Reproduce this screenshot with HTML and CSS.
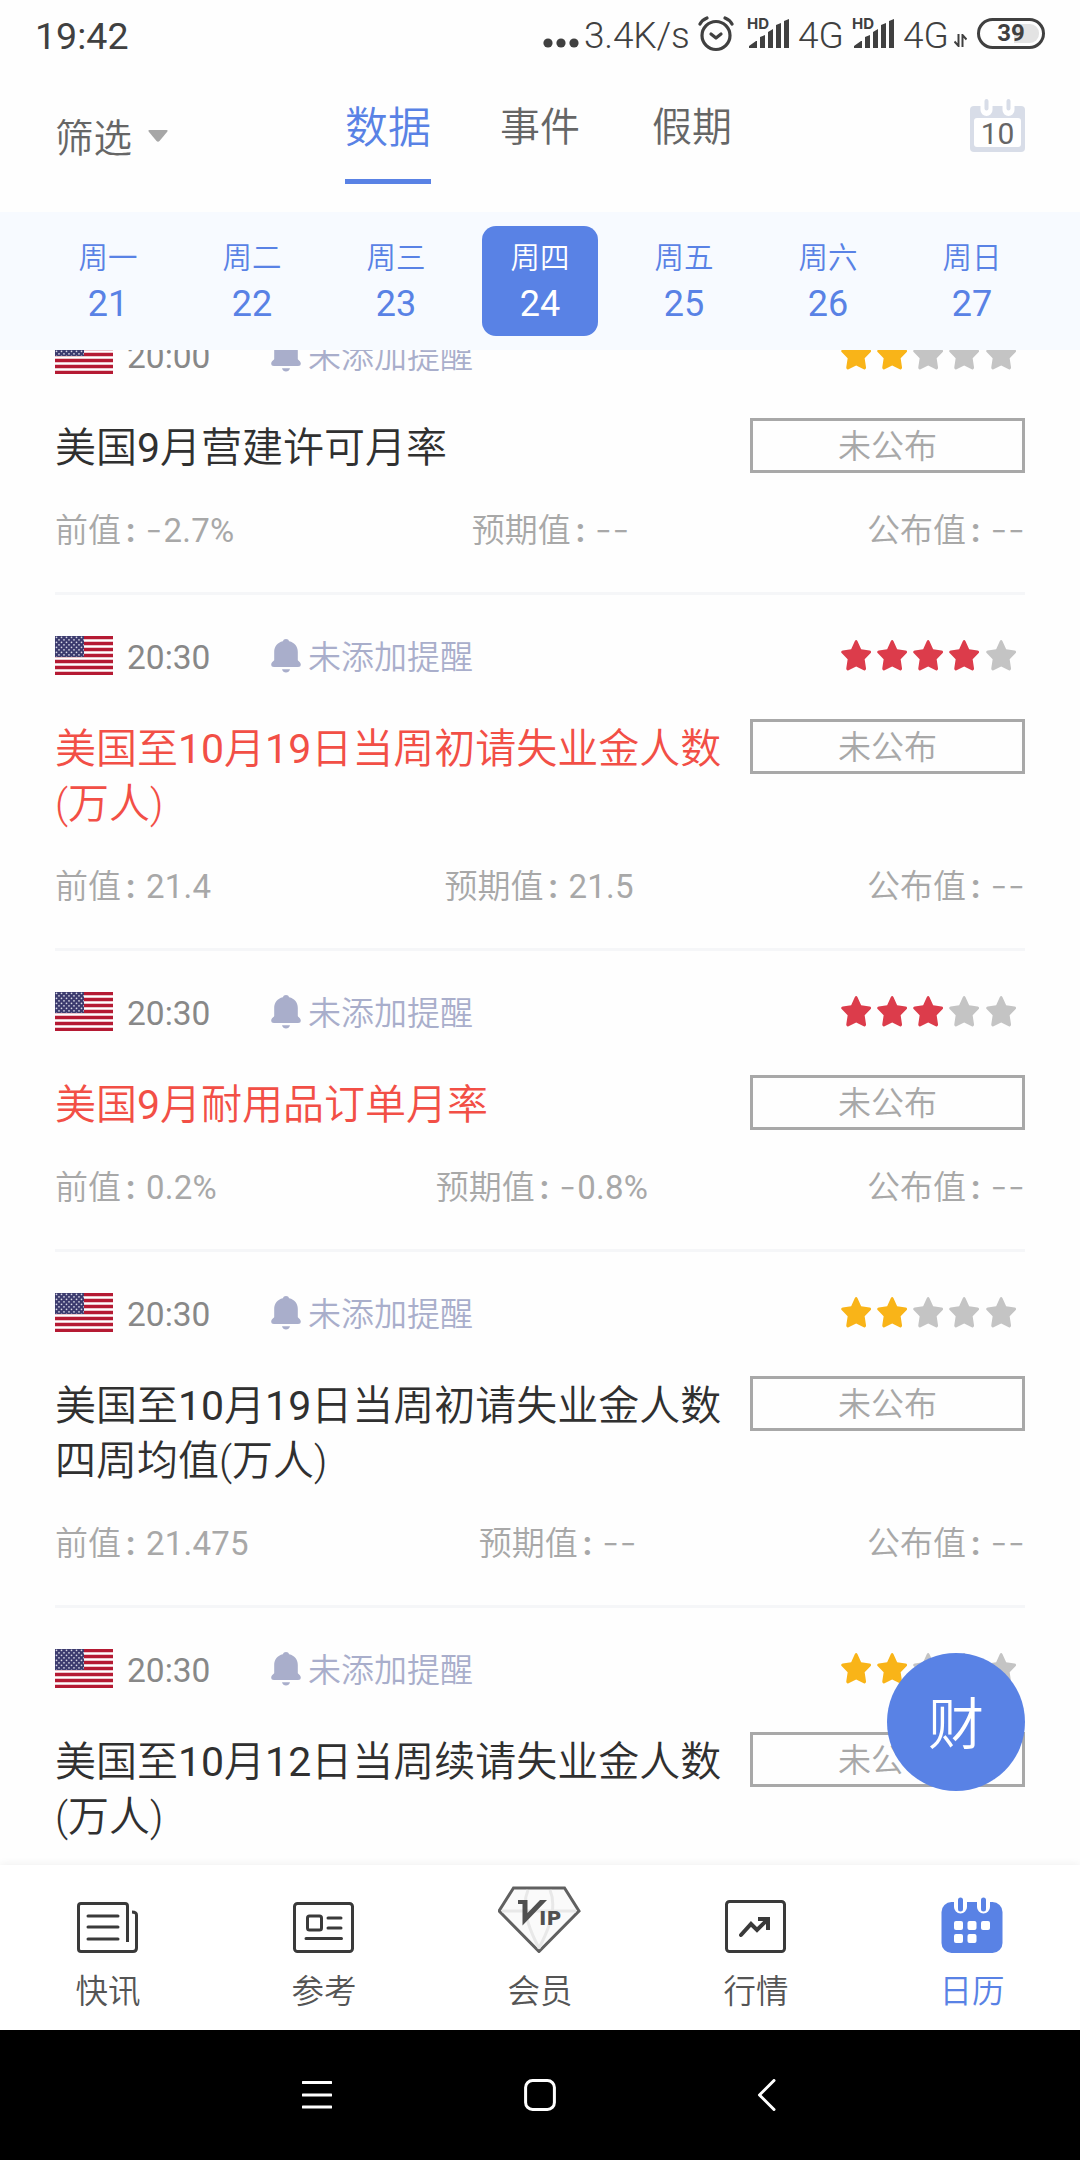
FILE: index.html
```html
<!DOCTYPE html>
<html lang="zh-CN">
<head>
<meta charset="utf-8">
<title>财经日历</title>
<link rel="stylesheet" href="styles.css">
</head>
<body>
<svg class="defs" width="0" height="0" aria-hidden="true">
  <symbol id="star" viewBox="0 0 30 31"><path d="M13.6 1.2Q15 -1 16.4 1.2L20 9.300L28.400 10.600Q31 11.300 29.300 13.300L23.500 19.300L24.900 28.600Q24.900 31 22.600 30.200L15 26.400L7.400 30.200Q5.100 31 5.100 28.600L6.500 19.300L.7 13.300Q-1 11.300 1.600 10.600L10 9.300Z" fill="currentColor"/></symbol>
  <symbol id="bell" viewBox="0 0 30 34"><path d="M15 0Q17.500 0 18.200 2.300C23.500 3.600 26.800 7.500 26.800 13V21C27 22 29.800 23 29.800 25.500Q29.800 28 27 28H3Q.2 28 .2 25.500C.2 23 3 22 3.200 21V13C3.200 7.500 6.500 3.600 11.800 2.300Q12.500 0 15 0ZM11 30.300H19Q18 33.500 15 33.500Q12 33.500 11 30.300Z" fill="#a9aecb"/></symbol>
  <pattern id="dots" width="5" height="5" patternUnits="userSpaceOnUse"><rect width="5" height="5" fill="#3c3b6e"/><circle cx="1.500" cy="1.300" r=".85" fill="#d8d8e6"/><circle cx="4" cy="3.800" r=".85" fill="#d8d8e6"/></pattern>
  <symbol id="flag" viewBox="0 0 58 39"><rect width="58" height="39" rx="1" fill="#fff"/><path d="M0 1.500H58M0 7.500H58M0 13.500H58M0 19.500H58M0 25.500H58M0 31.500H58M0 37.500H58" stroke="#b51a33" stroke-width="3.300"/><rect width="29" height="21" fill="url(#dots)"/></symbol>
</svg>
<div class="screen">
  <header class="status">
    <span class="clock">19:42</span>
    <div class="status-right">
      <svg class="more" width="36" height="10" viewBox="0 0 36 10" fill="#404040"><circle cx="5" cy="5" r="4.600"/><circle cx="18" cy="5" r="4.600"/><circle cx="31" cy="5" r="4.600"/></svg>
      <span class="speed">3.4K/s</span>
      <svg class="alarm" width="36" height="36" viewBox="0 0 36 36" fill="none" stroke="#404040" stroke-width="3.200" stroke-linecap="round"><circle cx="18" cy="19.500" r="14"/><path d="M2 8Q4 4 9 2M34 8Q32 4 27 2" /><path d="M13 18L18 22L23 18" stroke-linejoin="round"/></svg>
      <span class="sim"><span class="hd">HD</span><svg width="41" height="30" viewBox="0 0 41 30" fill="#404040"><path d="M0 30V28L7 23H8V30ZM11 19L16 17V30H11ZM19 14L24 11V30H19ZM27 7L32 5V30H27ZM35 3L40 1V30H35Z"/></svg></span>
      <span class="net">4G</span>
      <span class="sim"><span class="hd">HD</span><svg width="41" height="30" viewBox="0 0 41 30" fill="#404040"><path d="M0 30V28L7 23H8V30ZM11 19L16 17V30H11ZM19 14L24 11V30H19ZM27 7L32 5V30H27ZM35 3L40 1V30H35Z"/></svg></span>
      <span class="net">4G</span>
      <svg class="updown" width="13" height="13" viewBox="0 0 13 13" fill="none" stroke="#404040" stroke-width="2"><path d="M4.500 0V12L.5 7.500M8.500 13V1L12.500 5.500"/></svg>
      <span class="battery"><span class="charge">39</span></span>
    </div>
  </header>
  <div class="topbar">
    <div class="filter"><span>筛选</span><svg width="20" height="12" viewBox="0 0 20 12"><path d="M1.500 0H18.500Q20.500 0 19 2L11.500 11Q10 12.500 8.500 11L1 2Q-.5 0 1.500 0Z" fill="#a6a6a6"/></svg></div>
    <nav class="tabs"><span class="tab on">数据</span><span class="tab">事件</span><span class="tab">假期</span></nav>
    <div class="today"><svg width="55" height="53" viewBox="0 0 55 53"><rect y="7" width="55" height="46" rx="4" fill="#d8dde8"/><rect x="4" y="19" width="47" height="29" rx="3" fill="#fff"/><path d="M16.500 3V11M38.500 3V11" stroke="#fff" stroke-width="12" stroke-linecap="round"/><path d="M16.500 2V9.500M38.500 2V9.500" stroke="#d8dde8" stroke-width="4" stroke-linecap="round"/></svg><span class="today-num">10</span></div>
  </div>
  <div class="week">
    <div class="day"><span>周一</span><b>21</b></div>
    <div class="day"><span>周二</span><b>22</b></div>
    <div class="day"><span>周三</span><b>23</b></div>
    <div class="day on"><span>周四</span><b>24</b></div>
    <div class="day"><span>周五</span><b>25</b></div>
    <div class="day"><span>周六</span><b>26</b></div>
    <div class="day"><span>周日</span><b>27</b></div>
  </div>
  <main class="list">
    <div class="scroll" id="rows"></div>
  </main>
  <div class="fab">财</div>
  <nav class="bottom">
    <div class="item"><svg width="62" height="67" viewBox="0 0 62 67" fill="none" stroke="#3a3a3a" stroke-width="3"><path d="M50.500 56V20Q50.500 17.500 48 17.500H4Q1.500 17.500 1.500 20V63Q1.500 65.500 4 65.500H56Q59.500 65.500 59.500 62V29Q59.500 26 55 26"/><path d="M11 30H41M11 41H41M11 53H41" stroke-linecap="round"/></svg><span>快讯</span></div>
    <div class="item"><svg width="62" height="67" viewBox="0 0 62 67" fill="none" stroke="#3a3a3a" stroke-width="3"><rect x="1.500" y="17.500" width="58" height="48" rx="3"/><rect x="14.500" y="30" width="14" height="14" rx="2"/><path d="M35 32H48M35 42H48M13 52.500H48.500" stroke-linecap="round"/></svg><span>参考</span></div>
    <div class="item"><svg width="84" height="67" viewBox="1 0 84 67"><path d="M16.500 2H67.500L82 25L42 65.500L2 25Z" fill="#fafafa" stroke="#606060" stroke-width="3"/><path d="M5 25H79M31 4Q22 25 42 62M53 4Q62 25 42 62" fill="none" stroke="#e8e8e8" stroke-width="3"/><path d="M21 14H30.500V27L43 14H50L25.500 39.500V18H21Z" fill="#505050"/><text x="42" y="39" class="ip">IP</text></svg><span>会员</span></div>
    <div class="item"><svg width="62" height="67" viewBox="0 0 62 67" fill="none" stroke="#3a3a3a" stroke-width="3"><rect x="1.500" y="15.500" width="58" height="50" rx="3"/><path d="M16 49L26 38L32 44L43 33" stroke-width="4" stroke-linecap="round"/><path d="M33 33H43V44" stroke-width="4"/></svg><span>行情</span></div>
    <div class="item on"><svg width="62" height="67" viewBox="0 0 62 67"><rect x=".5" y="16" width="61" height="51" rx="10" fill="#5982e5"/><path d="M19.500 16V21M42.500 16V21" stroke="#fff" stroke-width="13" stroke-linecap="round"/><path d="M19.500 14V23M42.500 14V23" stroke="#5982e5" stroke-width="5" stroke-linecap="round"/><g fill="#fff"><rect x="13" y="35" width="9" height="9" rx="2"/><rect x="26.500" y="35" width="9" height="9" rx="2"/><rect x="40" y="35" width="9" height="9" rx="2"/><rect x="13" y="48" width="9" height="9" rx="2"/><rect x="26.500" y="48" width="9" height="9" rx="2"/></g></svg><span>日历</span></div>
  </nav>
  <footer class="system">
    <svg width="30" height="32" viewBox="0 0 30 32"><path d="M1 3.500H29M1 16H29M1 28H29" stroke="#fff" stroke-width="3" stroke-linecap="round"/></svg>
    <svg width="32" height="32" viewBox="0 0 32 32"><rect x="1.600" y="1.600" width="28.800" height="28.800" rx="7" fill="none" stroke="#fff" stroke-width="3"/></svg>
    <svg class="back" width="20" height="32" viewBox="0 0 20 32"><path d="M17 1.500L2.500 16L17 30.500" fill="none" stroke="#fff" stroke-width="3" stroke-linecap="round" stroke-linejoin="round"/></svg>
  </footer>
</div>
<script src="app.js"></script>
</body>
</html>
```
FILE: app.js
```js
const events = [
  { time: '20:00', level: 2, title: '美国9月营建许可月率', prev: '-2.7%', expect: '--' },
  { time: '20:30', level: 4, title: '美国至10月19日当周初请失业金人数(万人)', prev: '21.4', expect: '21.5' },
  { time: '20:30', level: 3, title: '美国9月耐用品订单月率', prev: '0.2%', expect: '-0.8%' },
  { time: '20:30', level: 2, title: '美国至10月19日当周初请失业金人数四周均值(万人)', prev: '21.475', expect: '--' },
  { time: '20:30', level: 2, title: '美国至10月12日当周续请失业金人数(万人)' }
];
const latin = s => s.replace(/[\d.%]+/g, '<i class="num">$&</i>');
const value = (label, v) =>
  `<span class="value">${label}<i class="colon">:</i>${latin(v).replace(/-/g, '<i class="dash">-</i>')}</span>`;
const stars = n => [1, 2, 3, 4, 5].map(i =>
  `<svg class="star ${i > n ? '' : n > 2 ? 'red' : 'gold'}"><use href="#star"/></svg>`).join('');
document.getElementById('rows').innerHTML = events.map(e => `
  <article class="event ${e.level > 2 ? 'hot' : ''}">
    <div class="meta"><svg class="flag"><use href="#flag"/></svg><span class="time">${e.time}</span>
      <svg class="bell"><use href="#bell"/></svg><span class="remind">未添加提醒</span><span class="stars">${stars(e.level)}</span></div>
    <div class="main"><h2>${latin(e.title)}</h2><span class="state">未公布</span></div>
    <div class="values">${e.prev ? value('前值', e.prev) + value('预期值', e.expect) + value('公布值', '--') : ''}</div>
  </article>`).join('');
```
FILE: styles.css
```css
* { box-sizing: border-box; }
body { margin: 0; background: #fefefe; font-family: Roboto, "Noto Sans CJK SC", sans-serif; font-weight: 350; }
svg { display: block; flex: none; }
i, b { font-style: normal; font-weight: 400; }
.defs { position: absolute; }
.screen { width: 1080px; height: 2160px; display: flex; flex-direction: column; position: relative; overflow: hidden; }

.status { height: 70px; flex: none; display: flex; justify-content: space-between; padding: 0 35px 0 35px; color: #404040; }
.clock { font-size: 37.600px; line-height: 72px; font-weight: 400; }
.status-right { display: flex; align-items: flex-start; font-size: 37px; line-height: 71px; }
.more { margin-top: 38px; }
.speed { width: 106px; margin-left: 5px; letter-spacing: -.2px; }
.alarm { margin: 16px 15px 0 8px; }
.sim { display: flex; position: relative; padding-top: 18px; width: 49px; }
.hd { position: absolute; left: -2px; top: 16px; font: 700 15px/15px Inter, sans-serif; }
.net { width: 56px; }
.updown { margin: 34px 10px 0 -5px; }
.battery { width: 68px; height: 31px; margin-top: 18px; border: 3px solid #404040; border-radius: 16px; padding: 3px; display: flex; }
.charge { flex: 1; border-radius: 9px; background: linear-gradient(90deg, #fff 55%, #e3e3e3 55%); font: 700 24px/19px Roboto, sans-serif; text-align: center; }

.topbar { height: 142px; flex: none; display: flex; padding: 0 55px; color: #666; }
.filter { width: 290px; display: flex; align-items: flex-start; gap: 16px; font-size: 38.500px; line-height: 56px; padding-top: 41px; }
.filter svg { margin-top: 19px; }
.tabs { display: flex; flex: 1; }
.tab { font-size: 40px; line-height: 60px; padding-top: 28px; height: 114px; margin-right: 72px; }
.tab.on { font-size: 43px; color: #5982e5; border-bottom: 5px solid #5982e5; margin-right: 69px; }
.today { position: relative; padding-top: 29px; }
.today-num { position: absolute; left: 0; width: 55px; top: 48px; text-align: center; font: 400 30px/32px Roboto, sans-serif; }

.week { height: 138px; flex: none; background: #f7faff; padding: 14px 36px; display: flex; color: #5982e5; z-index: 1; }
.day { width: 116px; height: 110px; margin: 0 14px; border-radius: 14px; display: flex; flex-direction: column; align-items: center; padding-top: 11px; }
.day span { font-size: 29.500px; line-height: 42px; }
.day b { font-size: 36px; line-height: 50px; }
.day.on { background: #5982e5; color: #fff; }

.list { height: 1515px; flex: none; overflow: hidden; }
.scroll { margin-top: -56px; }
.event { margin: 0 55px; border-bottom: 3px solid #f5f6f8; padding-top: 41px; }
.meta { display: flex; align-items: center; height: 39px; }
.flag { width: 58px; height: 39px; }
.time { margin-left: 14px; width: 144px; padding-top: 3px; font-size: 33.500px; font-weight: 400; color: #888; }
.bell { width: 30px; height: 34px; }
.remind { margin-left: 7px; font-size: 33px; color: #a9aecb; position: relative; top: -1px; }
.stars { margin-left: auto; margin-right: 9px; display: flex; gap: 6px; }
.star { width: 30.300px; height: 31px; color: #c4c4c4; }
.star.red { color: #dc3c4b; }
.star.gold { color: #f9b418; }
.main { display: flex; justify-content: space-between; align-items: flex-start; margin-top: 44px; }
h2 { margin: 0 0 -3px; width: 674px; font-size: 41px; line-height: 55px; font-weight: 350; color: #303030; padding-top: 3px; }
.hot h2 { color: #f24f46; }
.state { width: 275px; height: 55px; border: 3px solid #a8a8a8; font-size: 33px; line-height: 52px; text-align: center; color: #a8a8a8; }
.values { display: flex; justify-content: space-between; height: 119px; padding-top: 34px; font-size: 33px; line-height: 48px; color: #a8a8a8; }
.value { display: flex; }
.value .num { padding-left: 1px; letter-spacing: .2px; }
.colon { width: 24px; padding-left: 5px; font-weight: 700; }
.dash { font-family: Inter, sans-serif; width: 17.500px; text-align: center; font-size: 38px; line-height: 45px; font-weight: 300; }

.fab { position: absolute; left: 887px; top: 1653px; width: 138px; height: 138px; border-radius: 50%; background: #5982e5; color: #fff; font-size: 56px; line-height: 144px; text-align: center; z-index: 2; }
.bottom { height: 165px; flex: none; display: flex; background: #fff; box-shadow: 0 -1px 8px rgba(0,0,0,.06); z-index: 1; }
.item { width: 216px; display: flex; flex-direction: column; align-items: center; padding-top: 21px; color: #555; font-size: 32.500px; line-height: 46px; gap: 16px; }
.item.on { color: #5982e5; }
.ip { font: 700 20px "DejaVu Sans", sans-serif; fill: #505050; }
.system { height: 130px; flex: none; background: #000; display: flex; align-items: center; gap: 192px; padding-left: 302px; }
.back { margin-left: 9px; }
```
